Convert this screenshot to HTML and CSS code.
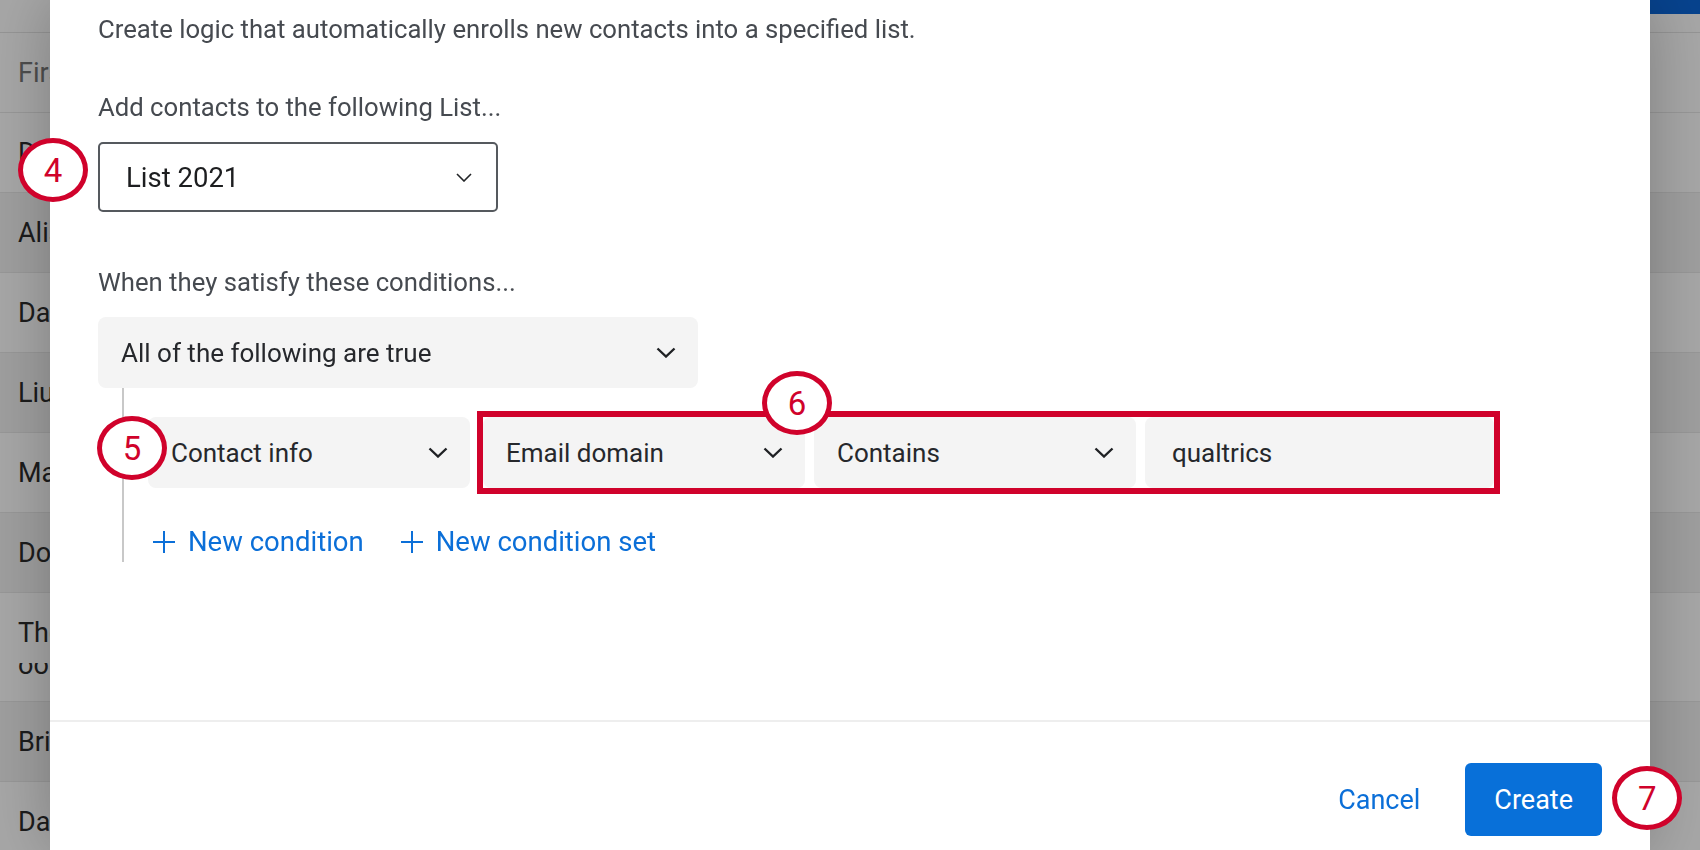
FILE: index.html
```html
<!DOCTYPE html>
<html>
<head>
    <title>Contacts - Automatic enrollment</title>
    <link rel="stylesheet" href="styles.css">
</head>
<body>
    <!-- contact directory behind the dialog -->
    <div class="page">
        <div class="toolbar">
            <span class="toolbar-button"></span>
        </div>
        <div class="table-row table-head"><span>First name</span></div>
        <div class="table-row"><span>David</span></div>
        <div class="table-row"><span>Alison</span></div>
        <div class="table-row"><span>Daniel</span></div>
        <div class="table-row"><span>Liu</span></div>
        <div class="table-row"><span>Mateo</span></div>
        <div class="table-row"><span>Dominique</span></div>
        <div class="table-row tall"><span>Theodore</span><span class="wrap-line">oo</span></div>
        <div class="table-row"><span>Brianna</span></div>
        <div class="table-row"><span>Dana</span></div>
    </div>

    <div class="overlay">
        <div class="modal">
            <div class="modal-body">
                <p class="intro">Create logic that automatically enrolls new contacts into a specified list.</p>

                <p class="field-label">Add contacts to the following List...</p>
                <div class="list-select">
                    <span>List 2021</span>
                    <svg width="16" height="9" viewBox="0 0 16 9"><path d="M1 1l7 7 7-7" fill="none" stroke="#222427" stroke-width="1.6"/></svg>
                    <span class="step step-4">4</span>
                </div>

                <p class="field-label label-conditions">When they satisfy these conditions...</p>
                <div class="select group-select">
                    <span>All of the following are true</span>
                    <svg class="chevron" width="20" height="11" viewBox="0 0 20 11"><path d="M1.5 1.5 10 9.5 18.5 1.5" fill="none" stroke="#1f2124" stroke-width="2.4"/></svg>
                </div>

                <div class="tree">
                    <div class="condition-row">
                        <span class="step step-5">5</span>
                        <div class="select">
                            <span>Contact info</span>
                            <svg class="chevron" width="20" height="11" viewBox="0 0 20 11"><path d="M1.5 1.5 10 9.5 18.5 1.5" fill="none" stroke="#1f2124" stroke-width="2.4"/></svg>
                        </div>
                        <div class="highlight">
                            <span class="step step-6">6</span>
                            <div class="select">
                                <span>Email domain</span>
                                <svg class="chevron" width="20" height="11" viewBox="0 0 20 11"><path d="M1.5 1.5 10 9.5 18.5 1.5" fill="none" stroke="#1f2124" stroke-width="2.4"/></svg>
                            </div>
                            <div class="select">
                                <span>Contains</span>
                                <svg class="chevron" width="20" height="11" viewBox="0 0 20 11"><path d="M1.5 1.5 10 9.5 18.5 1.5" fill="none" stroke="#1f2124" stroke-width="2.4"/></svg>
                            </div>
                            <div class="text-field">qualtrics</div>
                        </div>
                    </div>

                    <div class="links">
                        <a class="add-link" href="#">
                            <svg width="22" height="22" viewBox="0 0 22 22"><path d="M11 0v22M0 11h22" stroke="currentColor" stroke-width="2"/></svg>
                            New condition
                        </a>
                        <a class="add-link" href="#">
                            <svg width="22" height="22" viewBox="0 0 22 22"><path d="M11 0v22M0 11h22" stroke="currentColor" stroke-width="2"/></svg>
                            New condition set
                        </a>
                    </div>
                </div>
            </div>

            <div class="modal-footer">
                <button class="btn-link">Cancel</button>
                <button class="btn-primary">Create<span class="step step-7">7</span></button>
            </div>
        </div>
    </div>
</body>
</html>
```

FILE: styles.css
```css
body {
    margin: 0;
    font-family: Roboto, 'Liberation Sans', sans-serif;
    background-color: #ffffff;
    color: #2b2b2b;
}

/* directory table */
.toolbar {
    height: 32px;
    border-bottom: 1px solid #e4e4e4;
    display: flex;
    justify-content: flex-end;
}
.toolbar-button {
    width: 220px;
    height: 14px;
    background-color: #0a66d8;
}
.table-row {
    height: 79px;
    border-bottom: 1px solid #e8e8e8;
    display: flex;
    align-items: center;
    padding-left: 18px;
    font-size: 27px;
    color: #2b2b2b;
}
.table-row:nth-child(2n+4) {
    background-color: #f3f3f3;
}
.table-head {
    color: #777777;
}
.table-row.tall {
    height: 109px;
    flex-direction: column;
    align-items: flex-start;
    padding-top: 24px;
    box-sizing: border-box;
    line-height: 32px;
}
.wrap-line {
    clip-path: inset(14px 0 0 0);
}

/* dialog */
.overlay {
    position: fixed;
    top: 0;
    left: 0;
    right: 0;
    bottom: 0;
    background-color: rgba(0, 0, 0, 0.35);
    display: flex;
    justify-content: center;
    overflow: hidden;
}
.modal {
    width: 1600px;
    flex-shrink: 0;
    background-color: #ffffff;
    box-shadow: 0 0 60px rgba(0, 0, 0, 0.25);
}
.modal-body {
    height: 720px;
    box-sizing: border-box;
    padding: 14px 48px 0;
}
.intro, .field-label {
    margin: 0;
    font-size: 25.7px;
    line-height: 30px;
    color: #464a50;
}
.field-label {
    margin-top: 48px;
}
.field-label.label-conditions {
    margin-top: 55px;
}
.list-select {
    position: relative;
    margin-top: 20px;
    width: 400px;
    height: 70px;
    box-sizing: border-box;
    border: 2px solid #55595e;
    border-radius: 5px;
    padding: 0 24px 0 26px;
    display: flex;
    align-items: center;
    justify-content: space-between;
    font-size: 27.5px;
    color: #1d1e20;
}
.select, .text-field {
    width: 322px;
    height: 71px;
    box-sizing: border-box;
    background-color: #f4f4f4;
    border-radius: 8px;
    padding: 0 22px 0 23px;
    display: flex;
    align-items: center;
    justify-content: space-between;
    font-size: 26px;
    color: #26282c;
}
.group-select {
    width: 600px;
    margin-top: 20px;
}
.text-field {
    width: 349px;
    padding-left: 27px;
}
.tree {
    margin-left: 24px;
    border-left: 2px solid #c8c8c8;
    padding: 29px 0 4px 24px;
}
.condition-row {
    position: relative;
    display: flex;
    gap: 13px;
}
.highlight {
    position: relative;
    display: flex;
    gap: 9px;
    outline: 6px solid #d0022b;
}
.links {
    margin-top: 38px;
    padding-left: 5px;
    display: flex;
    gap: 37px;
}
.add-link {
    display: flex;
    align-items: center;
    gap: 13px;
    font-size: 27.5px;
    line-height: 32px;
    color: #0b6fd8;
    text-decoration: none;
}

.modal-footer {
    border-top: 2px solid #eeeeee;
    padding: 41px 48px;
    display: flex;
    justify-content: flex-end;
    align-items: center;
}
.btn-link, .btn-primary {
    font-family: inherit;
    font-size: 27px;
    border: none;
    cursor: pointer;
}
.btn-link {
    background: none;
    color: #0b6fd8;
    padding: 0 20px;
    margin-right: 25px;
}
.btn-primary {
    position: relative;
    height: 73px;
    padding: 0 29px;
    border-radius: 6px;
    background-color: #0870d9;
    color: #ffffff;
}

/* numbered callouts */
.step {
    position: absolute;
    width: 70px;
    height: 64px;
    box-sizing: border-box;
    border: 5px solid #d0022b;
    border-radius: 50%;
    background-color: #ffffff;
    color: #d0022b;
    font-size: 33px;
    line-height: 1;
    display: flex;
    align-items: center;
    justify-content: center;
    z-index: 2;
}
.step-4 {
    left: -82px;
    top: -6px;
}
.step-5 {
    left: -51px;
    top: -1px;
}
.step-6 {
    left: 279px;
    top: -46px;
}
.step-7 {
    left: 147px;
    top: 3px;
}
```
